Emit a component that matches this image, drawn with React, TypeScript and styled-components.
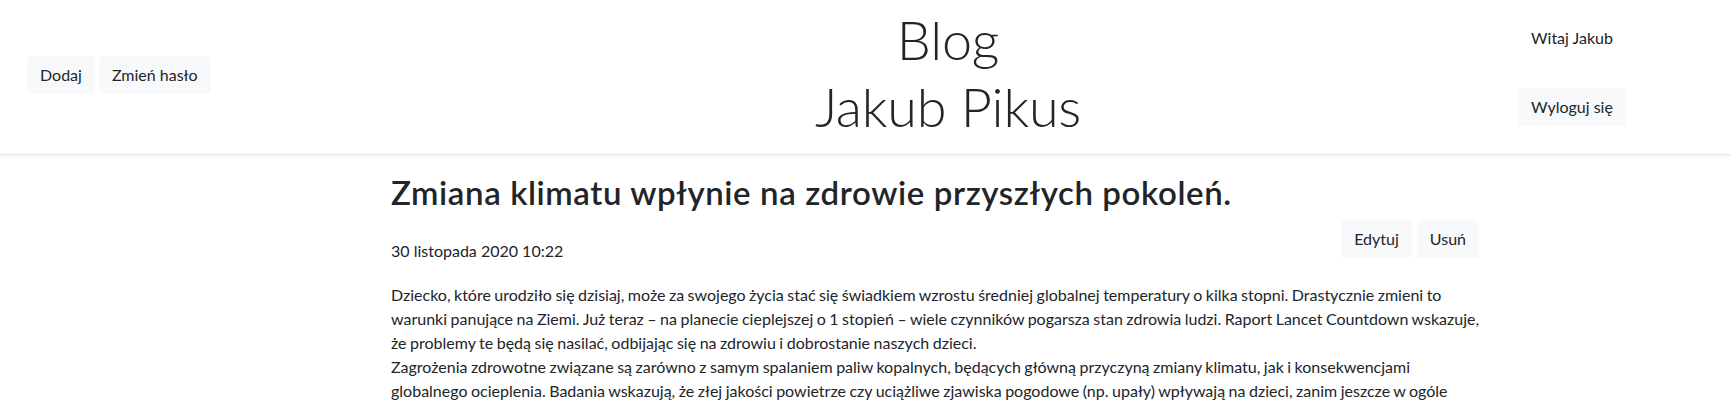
import React from "react";
import styled, { createGlobalStyle } from "styled-components";

const GlobalStyle = createGlobalStyle`
  html, body {
    margin: 0;
    padding: 0;
    background: #fff;
    color: #212529;
    font-family: Lato, "Liberation Sans", sans-serif;
    font-size: 16px;
    line-height: 24px;
    overflow: hidden;
  }
  * { box-sizing: border-box; }
`;

const Header = styled.header`
  display: grid;
  grid-template-columns: 483px 930px 318px;
  height: 154px;
  box-shadow: 0 2px 4px rgba(0, 0, 0, 0.075), 0 1px 0 rgba(0, 0, 0, 0.04);
  position: relative;
  z-index: 1;
`;

const LeftNav = styled.nav`
  display: flex;
  align-items: flex-start;
  gap: 4px;
  padding: 56px 0 0 27px;
`;

const BrandTitle = styled.h1`
  margin: 0;
  padding-top: 6px;
  text-align: center;
  font-weight: 300;
  font-size: 54px;
  line-height: 67px;
  letter-spacing: -0.2px;
`;

const UserBox = styled.div`
  display: flex;
  flex-direction: column;
  align-items: center;
  padding-top: 26px;
`;

const Greeting = styled.span`
  line-height: 24px;
  margin-bottom: 38px;
`;

const Button = styled.button`
  display: inline-flex;
  align-items: center;
  justify-content: center;
  height: 38px;
  padding: 6px 12px;
  border: 1px solid #f8f9fa;
  border-radius: 4px;
  background: #f8f9fa;
  color: #212529;
  font-family: inherit;
  font-size: 16px;
  line-height: 24px;
  cursor: pointer;
`;

const Main = styled.main`
  display: grid;
  grid-template-columns: 391px 1088px;
`;

const Article = styled.article`
  grid-column: 2;
  padding-top: 19px;
`;

const PostTitle = styled.h2`
  margin: 0 0 9px;
  font-size: 33px;
  font-weight: 600;
  line-height: 38px;
  letter-spacing: 0.6px;
`;

const MetaRow = styled.div`
  display: flex;
  justify-content: space-between;
  align-items: flex-start;
`;

const PostDate = styled.time`
  padding-top: 19px;
  line-height: 24px;
`;

const Actions = styled.div`
  display: flex;
  gap: 5px;
`;

const Body = styled.p`
  margin: 20px 0 0;
  width: 1130px;
  white-space: pre-line;
  line-height: 24px;
  word-spacing: -0.6px;
`;

const bodyText = `Dziecko, które urodziło się dzisiaj, może za swojego życia stać się świadkiem wzrostu średniej globalnej temperatury o kilka stopni. Drastycznie zmieni to
warunki panujące na Ziemi. Już teraz – na planecie cieplejszej o 1 stopień – wiele czynników pogarsza stan zdrowia ludzi. Raport Lancet Countdown wskazuje,
że problemy te będą się nasilać, odbijając się na zdrowiu i dobrostanie naszych dzieci.
Zagrożenia zdrowotne związane są zarówno z samym spalaniem paliw kopalnych, będących główną przyczyną zmiany klimatu, jak i konsekwencjami
globalnego ocieplenia. Badania wskazują, że złej jakości powietrze czy uciążliwe zjawiska pogodowe (np. upały) wpływają na dzieci, zanim jeszcze w ogóle
przyjdą one na świat.`;

export default function App() {
  return (
    <>
      <GlobalStyle />
      <Header>
        <LeftNav>
          <Button>Dodaj</Button>
          <Button>Zmień hasło</Button>
        </LeftNav>
        <BrandTitle>
          Blog
          <br />
          Jakub Pikus
        </BrandTitle>
        <UserBox>
          <Greeting>Witaj Jakub</Greeting>
          <Button>Wyloguj się</Button>
        </UserBox>
      </Header>
      <Main>
        <Article>
          <PostTitle>Zmiana klimatu wpłynie na zdrowie przyszłych pokoleń.</PostTitle>
          <MetaRow>
            <PostDate>30 listopada 2020 10:22</PostDate>
            <Actions>
              <Button>Edytuj</Button>
              <Button>Usuń</Button>
            </Actions>
          </MetaRow>
          <Body>{bodyText}</Body>
        </Article>
      </Main>
    </>
  );
}
